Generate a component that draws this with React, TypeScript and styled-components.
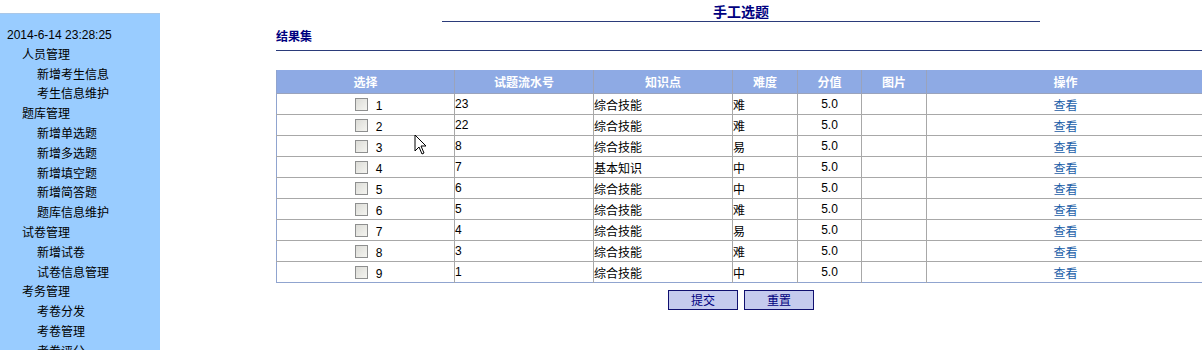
import React from "react";
import styled, { createGlobalStyle } from "styled-components";

const GlobalStyle = createGlobalStyle`
  html, body {
    margin: 0;
    padding: 0;
    background: #ffffff;
    overflow: hidden;
  }
  body {
    font-family: "Liberation Sans", "Noto Sans CJK SC", sans-serif;
    font-size: 12px;
    color: #000;
  }
`;

const Page = styled.div`
  display: flex;
  width: 1202px;
  height: 350px;
  overflow: hidden;
  position: relative;
`;

const Sidebar = styled.div`
  width: 160px;
  flex: none;
  margin-top: 13px;
  background: #99ccff;
  border-top: 1px solid #a9c7e8;
  padding-top: 12px;
  box-sizing: border-box;
`;

const MenuLine = styled.div<{ level: number }>`
  padding-left: ${(p) => (p.level === 0 ? 7 : p.level === 1 ? 22 : 37)}px;
  line-height: 19.8px;
  height: 19.8px;
  font-size: 12px;
  white-space: nowrap;
  color: #000;
`;

const Main = styled.div`
  flex: none;
  width: 1042px;
  padding-left: 116px;
  box-sizing: border-box;
  overflow: hidden;
`;

const Content = styled.div`
  width: 940px;
`;

const TitleBar = styled.div`
  margin-left: 166px;
  width: 598px;
  border-bottom: 1px solid #2b3b7a;
  text-align: center;
  font-weight: bold;
  font-size: 14px;
  color: #000080;
  height: 22px;
  line-height: 24px;
  box-sizing: border-box;
`;

const SectionHead = styled.div`
  margin-top: 6px;
  height: 22px;
  line-height: 18px;
  border-bottom: 1px solid #2b3b7a;
  font-weight: bold;
  font-size: 12px;
  color: #000080;
`;

const Table = styled.table`
  margin-top: 19px;
  width: 928px;
  border-collapse: collapse;
  table-layout: fixed;
  border-left: 1px solid #90a4cf;
  border-bottom: 1px solid #90a4cf;
`;

const Th = styled.th<{ w: number }>`
  width: ${(p) => p.w}px;
  height: 23px;
  padding: 0;
  background: #8eaae4;
  color: #fff;
  font-weight: bold;
  font-size: 12px;
  text-align: center;
  border-right: 1px solid #9aa3bc;
  border-bottom: 1px solid #9aa3bc;
`;

const Td = styled.td<{ align?: string }>`
  height: 20px;
  padding: 0;
  font-size: 12px;
  text-align: ${(p) => p.align || "left"};
  border-right: 1px solid #a8a8a8;
  border-top: 1px solid #a8a8a8;
  white-space: nowrap;
  overflow: hidden;
`;

const Pick = styled.div`
  display: flex;
  justify-content: center;
  align-items: center;
  gap: 8px;
  height: 20px;
  padding-left: 6px;
`;

const Box = styled.input`
  appearance: none;
  margin: 0;
  width: 13px;
  height: 13px;
  border: 1px solid #8e8f8f;
  background: linear-gradient(135deg, #dcdcd7 0%, #f4f4f0 100%);
  box-sizing: border-box;
`;

const Num = styled.span`
  position: relative;
  top: 2px;
`;

const ViewLink = styled.a`
  color: #1a5ea8;
  text-decoration: none;
`;

const ButtonRow = styled.div`
  display: flex;
  gap: 6px;
  margin-top: 7px;
  margin-left: 392px;
`;

const Btn = styled.button`
  width: 70px;
  height: 20px;
  padding: 0;
  background: #c5cbee;
  border: 1px solid #101070;
  color: #000080;
  font-family: "Noto Sans CJK SC", sans-serif;
  font-size: 12px;
  line-height: 18px;
`;

const Cursor = styled.svg`
  position: absolute;
  left: 414px;
  top: 134px;
`;

const menu: [number, string][] = [
  [0, "2014-6-14 23:28:25"],
  [1, "人员管理"],
  [2, "新增考生信息"],
  [2, "考生信息维护"],
  [1, "题库管理"],
  [2, "新增单选题"],
  [2, "新增多选题"],
  [2, "新增填空题"],
  [2, "新增简答题"],
  [2, "题库信息维护"],
  [1, "试卷管理"],
  [2, "新增试卷"],
  [2, "试卷信息管理"],
  [1, "考务管理"],
  [2, "考卷分发"],
  [2, "考卷管理"],
  [2, "考卷评分"],
];

const rows = [
  ["23", "综合技能", "难"],
  ["22", "综合技能", "难"],
  ["8", "综合技能", "易"],
  ["7", "基本知识", "中"],
  ["6", "综合技能", "中"],
  ["5", "综合技能", "难"],
  ["4", "综合技能", "易"],
  ["3", "综合技能", "难"],
  ["1", "综合技能", "中"],
];

const cols: [string, number][] = [
  ["选择", 177],
  ["试题流水号", 138],
  ["知识点", 138],
  ["难度", 64],
  ["分值", 63],
  ["图片", 64],
  ["操作", 277],
];

export default function App() {
  return (
    <Page>
      <GlobalStyle />
      <Sidebar>
        {menu.map(([level, label], i) => (
          <MenuLine key={i} level={level}>
            {label}
          </MenuLine>
        ))}
      </Sidebar>
      <Main>
        <Content>
          <TitleBar>手工选题</TitleBar>
          <SectionHead>结果集</SectionHead>
          <Table>
            <thead>
              <tr>
                {cols.map(([c, w]) => (
                  <Th key={c} w={w}>
                    {c}
                  </Th>
                ))}
              </tr>
            </thead>
            <tbody>
              {rows.map(([id, kp, diff], i) => (
                <tr key={i}>
                  <Td align="center">
                    <Pick>
                      <Box type="checkbox" readOnly />
                      <Num>{i + 1}</Num>
                    </Pick>
                  </Td>
                  <Td>{id}</Td>
                  <Td>{kp}</Td>
                  <Td>{diff}</Td>
                  <Td align="center">5.0</Td>
                  <Td />
                  <Td align="center">
                    <ViewLink href="#">查看</ViewLink>
                  </Td>
                </tr>
              ))}
            </tbody>
          </Table>
          <ButtonRow>
            <Btn>提交</Btn>
            <Btn>重置</Btn>
          </ButtonRow>
        </Content>
      </Main>
      <Cursor width="14" height="22" viewBox="0 0 14 22">
        <path
          d="M1 1 L1 17 L5 13 L8 20 L10 19 L7 12 L12 12 Z"
          fill="#fff"
          stroke="#000"
          strokeWidth="1"
        />
      </Cursor>
    </Page>
  );
}
